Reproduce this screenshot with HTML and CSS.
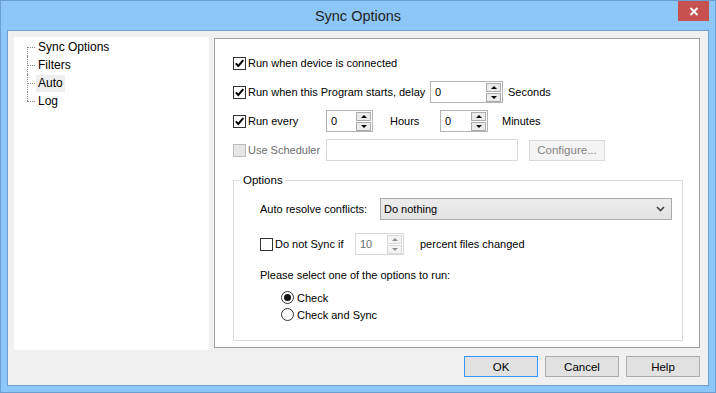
FILE: index.html
```html
<!DOCTYPE html>
<html lang="en">
<head>
    <meta charset="UTF-8">
    <title>Sync Options</title>
    <link rel="stylesheet" href="styles.css">
</head>
<body>
    <div class="window">
        <div class="titlebar">
            <span class="title">Sync Options</span>
            <button class="close" aria-label="Close">
                <svg width="10" height="9" viewBox="0 0 10 9"><path d="M1.5 1 L8.5 8 M8.5 1 L1.5 8" stroke="#fff" stroke-width="2"/></svg>
            </button>
        </div>
        <div class="client">
            <div class="main">
                <div class="tree">
                    <ul>
                        <li><span>Sync Options</span></li>
                        <li><span>Filters</span></li>
                        <li><span class="selected">Auto</span></li>
                        <li><span>Log</span></li>
                    </ul>
                </div>

                <div class="page">
                    <div class="row">
                        <label class="check"><span class="box checked"><svg width="11" height="11" viewBox="0 0 11 11"><path d="M1.8 5.4 L4.3 8 L9.3 2.2" fill="none" stroke="#000" stroke-width="2"/></svg></span>Run when device is connected</label>
                    </div>
                    <div class="row">
                        <label class="check w-delay"><span class="box checked"><svg width="11" height="11" viewBox="0 0 11 11"><path d="M1.8 5.4 L4.3 8 L9.3 2.2" fill="none" stroke="#000" stroke-width="2"/></svg></span>Run when this Program starts, delay</label>
                        <div class="spin w-73"><span class="value">0</span><span class="arrows"><i class="up"></i><i class="down"></i></span></div>
                        <span class="unit seconds">Seconds</span>
                    </div>
                    <div class="row">
                        <label class="check w-93"><span class="box checked"><svg width="11" height="11" viewBox="0 0 11 11"><path d="M1.8 5.4 L4.3 8 L9.3 2.2" fill="none" stroke="#000" stroke-width="2"/></svg></span>Run every</label>
                        <div class="spin w-47"><span class="value">0</span><span class="arrows"><i class="up"></i><i class="down"></i></span></div>
                        <span class="unit hours">Hours</span>
                        <div class="spin w-48"><span class="value">0</span><span class="arrows"><i class="up"></i><i class="down"></i></span></div>
                        <span class="unit minutes">Minutes</span>
                    </div>
                    <div class="row row-scheduler">
                        <label class="check w-93 disabled"><span class="box"></span>Use Scheduler</label>
                        <div class="textbox"></div>
                        <button class="btn btn-disabled">Configure...</button>
                    </div>

                    <fieldset class="group">
                        <legend>Options</legend>
                        <div class="group-body">
                            <div class="row">
                                <span class="field-label">Auto resolve conflicts:</span>
                                <div class="combo">
                                    <span>Do nothing</span>
                                    <svg width="9" height="6" viewBox="0 0 9 6"><path d="M1 1 L4.5 4.5 L8 1" fill="none" stroke="#444" stroke-width="1.6"/></svg>
                                </div>
                            </div>
                            <div class="row row-percent">
                                <label class="check w-95"><span class="box"></span>Do not Sync if</label>
                                <div class="spin w-49 spin-disabled"><span class="value">10</span><span class="arrows"><i class="up"></i><i class="down"></i></span></div>
                                <span class="unit percent">percent files changed</span>
                            </div>
                            <p class="prompt">Please select one of the options to run:</p>
                            <div class="radios">
                                <label class="radio"><span class="dot checked"></span>Check</label>
                                <label class="radio"><span class="dot"></span>Check and Sync</label>
                            </div>
                        </div>
                    </fieldset>
                </div>
            </div>

            <div class="actions">
                <button class="btn btn-default">OK</button>
                <button class="btn">Cancel</button>
                <button class="btn">Help</button>
            </div>
        </div>
    </div>
</body>
</html>
```

FILE: styles.css
```css
/* Reset & Global Styles */
* {
    margin: 0;
    padding: 0;
    box-sizing: border-box;
}
body {
    font-family: 'Liberation Sans', Arial, sans-serif;
    font-size: 11px;
    color: #000;
    background: #fff;
}

/* Window frame */
.window {
    width: 716px;
    height: 393px;
    background: #8cc7f7;
    border: 1px solid #6b9fd2;
    display: flex;
    flex-direction: column;
}
.titlebar {
    height: 29px;
    position: relative;
    display: flex;
    justify-content: center;
    align-items: center;
    flex-shrink: 0;
}
.title {
    font-size: 14.5px;
    color: #1f1f1f;
    padding-top: 1px;
}
.close {
    position: absolute;
    top: 0;
    right: 6px;
    width: 31px;
    height: 20px;
    border: none;
    background: #c75050;
    display: flex;
    justify-content: center;
    align-items: center;
}
.client {
    flex: 1;
    margin: 0 6px 6px 6px;
    background: #f0f0f0;
    border: 1px solid #6f9fd0;
    padding: 6px 8px 0 6px;
    display: flex;
    flex-direction: column;
}
.main {
    display: flex;
    align-items: flex-start;
    gap: 5px;
    height: 313px;
}

/* Tree */
.tree {
    width: 195px;
    height: 313px;
    background: #fff;
    padding-top: 1px;
}
.tree ul {
    list-style: none;
    margin-left: 13px;
}
.tree li {
    position: relative;
    height: 18px;
    padding-left: 9px;
    display: flex;
    align-items: center;
    font-size: 12px;
}
.tree li span {
    padding: 1px 2px 2px 2px;
}
.tree li span.selected {
    background: #efefef;
}
.tree li::before {
    content: '';
    position: absolute;
    left: 0;
    top: 9px;
    width: 8px;
    border-top: 1px dotted #8a8a8a;
}
.tree li::after {
    content: '';
    position: absolute;
    left: 0;
    top: 0;
    bottom: 0;
    border-left: 1px dotted #8a8a8a;
}
.tree li:first-child::after {
    top: 9px;
}
.tree li:last-child::after {
    bottom: 9px;
}

/* Right page */
.page {
    flex: 1;
    height: 310px;
    margin-top: 1px;
    background: #fff;
    border: 1px solid #a0a0a0;
    padding: 13px 0 0 18px;
}
.row {
    display: flex;
    align-items: center;
    height: 22px;
    margin-bottom: 7px;
    white-space: nowrap;
}
.row-scheduler {
    margin-top: 3px;
    margin-bottom: 0;
}

/* Checkbox */
.check {
    display: flex;
    align-items: center;
    flex-shrink: 0;
}
.box {
    width: 13px;
    height: 13px;
    border: 1px solid #333;
    background: #fff;
    margin-right: 2px;
    display: flex;
}
.check.disabled {
    color: #6d6d6d;
}
.check.disabled .box {
    border-color: #bcbcbc;
    background: #e6e6e6;
}
.w-delay { width: 197px; }
.w-93 { width: 93px; }
.w-95 { width: 95px; }

/* Spinner */
.spin {
    height: 22px;
    border: 1px solid #b3b3b3;
    background: #fff;
    display: flex;
    align-items: center;
    justify-content: space-between;
    flex-shrink: 0;
}
.w-73 { width: 73px; }
.w-47 { width: 47px; }
.w-48 { width: 48px; }
.w-49 { width: 49px; }
.spin .value {
    padding-left: 4px;
}
.spin .arrows {
    display: flex;
    flex-direction: column;
    gap: 1px;
    margin-right: 1px;
}
.spin .arrows i {
    width: 15px;
    height: 9px;
    border: 1px solid #acacac;
    background: #ebebeb;
    display: flex;
    justify-content: center;
    align-items: center;
}
.spin .arrows i::before {
    content: '';
    border-left: 3px solid transparent;
    border-right: 3px solid transparent;
}
.spin .arrows .up::before {
    border-bottom: 3px solid #000;
}
.spin .arrows .down::before {
    border-top: 3px solid #000;
}
.spin-disabled {
    border-color: #d9d9d9;
    color: #6d6d6d;
}
.spin-disabled .arrows i {
    border-color: #d9d9d9;
    background: #f4f4f4;
}
.spin-disabled .arrows .up::before {
    border-bottom-color: #8d8d8d;
}
.spin-disabled .arrows .down::before {
    border-top-color: #8d8d8d;
}
.unit.seconds { margin-left: 5px; }
.unit.hours {
    width: 67px;
    padding-left: 17px;
}
.unit.minutes { margin-left: 14px; }
.unit.percent { margin-left: 16px; }

.textbox {
    width: 192px;
    height: 22px;
    border: 1px solid #d9d9d9;
    background: #fff;
}

/* Buttons */
.btn {
    font-family: inherit;
    font-size: 11.5px;
    width: 74px;
    height: 21px;
    background: #e1e1e1;
    border: 1px solid #adadad;
    color: #000;
}
.btn-default {
    border-color: #3399ff;
}
.btn-disabled {
    width: 76px;
    margin-left: 11px;
    background: #f4f4f4;
    border-color: #dadada;
    color: #838383;
}

/* Options group */
.group {
    width: 450px;
    height: 169px;
    margin-top: 11px;
    border: 1px solid #dcdcdc;
    padding: 0;
}
.group legend {
    margin-left: 7px;
    padding: 0 2px;
    font-size: 11.5px;
    line-height: 16px;
}
.group-body {
    padding: 10px 10px 0 26px;
}
.group-body .row {
    margin-bottom: 13px;
}
.field-label {
    width: 120px;
}
.combo {
    width: 292px;
    height: 22px;
    background: linear-gradient(#ececec, #e3e3e3);
    border: 1px solid #acacac;
    display: flex;
    align-items: center;
    justify-content: space-between;
    padding: 0 6px 0 3px;
}
.row-percent {
    margin-bottom: 12px;
}
.prompt {
    line-height: 16px;
    margin-top: -1px;
}
.radios {
    margin-top: 6px;
    padding-left: 21px;
}
.radio {
    display: flex;
    align-items: center;
    height: 17px;
}
.dot {
    width: 13px;
    height: 13px;
    border: 1px solid #333;
    border-radius: 50%;
    margin-right: 3px;
    display: flex;
    justify-content: center;
    align-items: center;
}
.dot.checked::before {
    content: '';
    width: 7px;
    height: 7px;
    border-radius: 50%;
    background: #111;
}

/* Dialog buttons */
.actions {
    display: flex;
    justify-content: flex-end;
    gap: 7px;
    margin-top: 6px;
}
```
